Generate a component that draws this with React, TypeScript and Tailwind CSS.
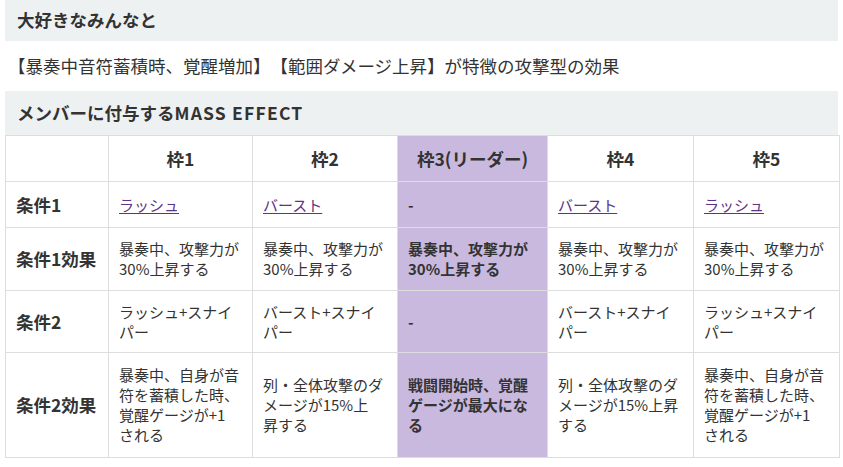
import React from "react";

const font = { fontFamily: '"Noto Sans CJK JP", "Noto Sans", sans-serif' };

function L({ children }: { children: React.ReactNode }) {
  return <a href="#" className="text-[#5e3487] underline underline-offset-2">{children}</a>;
}

const th = "border border-[#dddddd] text-center font-bold text-[17.5px] leading-[26px] px-[8px] whitespace-nowrap";
const rh = "border border-[#dddddd] text-left font-bold text-[17.5px] leading-[26px] pl-[10px] pr-[4px] whitespace-nowrap";
const td = "border border-[#dddddd] text-left text-[15px] leading-[20px] px-[10px] whitespace-nowrap align-middle";
const tdL = "border border-[#dddddd] text-left text-[15px] leading-[20px] px-[10px] whitespace-nowrap align-middle bg-[#c9b9df] font-bold";

export default function App() {
  return (
    <div className="w-[843px] h-[467px] bg-white px-[5px] text-[#333333] [text-spacing-trim:space-all]" style={font}>
      <h2 className="h-[41px] bg-[#eef1f2] flex items-center pl-[12px] text-[17.5px] font-bold">大好きなみんなと</h2>
      <p className="h-[50px] flex items-center pl-[3px] text-[17.5px]">【暴奏中音符蓄積時、覚醒増加】【範囲ダメージ上昇】が特徴の攻撃型の効果</p>
      <h2 className="h-[44px] bg-[#eef1f2] flex items-center pl-[12px] text-[17.5px] font-bold">メンバーに付与する<span className="tracking-[1.2px]">MASS EFFECT</span></h2>
      <table className="border-collapse table-fixed w-[834px]">
        <colgroup>
          <col className="w-[103px]" />
          <col className="w-[144px]" />
          <col className="w-[145px]" />
          <col className="w-[150px]" />
          <col className="w-[146px]" />
          <col className="w-[146px]" />
        </colgroup>
        <tbody>
          <tr className="h-[46px]">
            <th className={th}></th>
            <th className={th}>枠1</th>
            <th className={th}>枠2</th>
            <th className={th + " bg-[#c9b9df]"}>枠3(リーダー)</th>
            <th className={th}>枠4</th>
            <th className={th}>枠5</th>
          </tr>
          <tr className="h-[46px]">
            <th className={rh}>条件1</th>
            <td className={td}><L>ラッシュ</L></td>
            <td className={td}><L>バースト</L></td>
            <td className={tdL}>-</td>
            <td className={td}><L>バースト</L></td>
            <td className={td}><L>ラッシュ</L></td>
          </tr>
          <tr className="h-[63px]">
            <th className={rh}>条件1効果</th>
            <td className={td}>暴奏中、攻撃力が<br />30%上昇する</td>
            <td className={td}>暴奏中、攻撃力が<br />30%上昇する</td>
            <td className={tdL}>暴奏中、攻撃力が<br />30%上昇する</td>
            <td className={td}>暴奏中、攻撃力が<br />30%上昇する</td>
            <td className={td}>暴奏中、攻撃力が<br />30%上昇する</td>
          </tr>
          <tr className="h-[62px]">
            <th className={rh}>条件2</th>
            <td className={td}>ラッシュ+スナイ<br />パー</td>
            <td className={td}>バースト+スナイ<br />パー</td>
            <td className={tdL}>-</td>
            <td className={td}>バースト+スナイ<br />パー</td>
            <td className={td}>ラッシュ+スナイ<br />パー</td>
          </tr>
          <tr className="h-[105px]">
            <th className={rh}>条件2効果</th>
            <td className={td}>暴奏中、自身が音<br />符を蓄積した時、<br />覚醒ゲージが+1<br />される</td>
            <td className={td}>列・全体攻撃のダ<br />メージが15%上<br />昇する</td>
            <td className={tdL}>戦闘開始時、覚醒<br />ゲージが最大にな<br />る</td>
            <td className={td}>列・全体攻撃のダ<br />メージが15%上昇<br />する</td>
            <td className={td}>暴奏中、自身が音<br />符を蓄積した時、<br />覚醒ゲージが+1<br />される</td>
          </tr>
        </tbody>
      </table>
    </div>
  );
}
